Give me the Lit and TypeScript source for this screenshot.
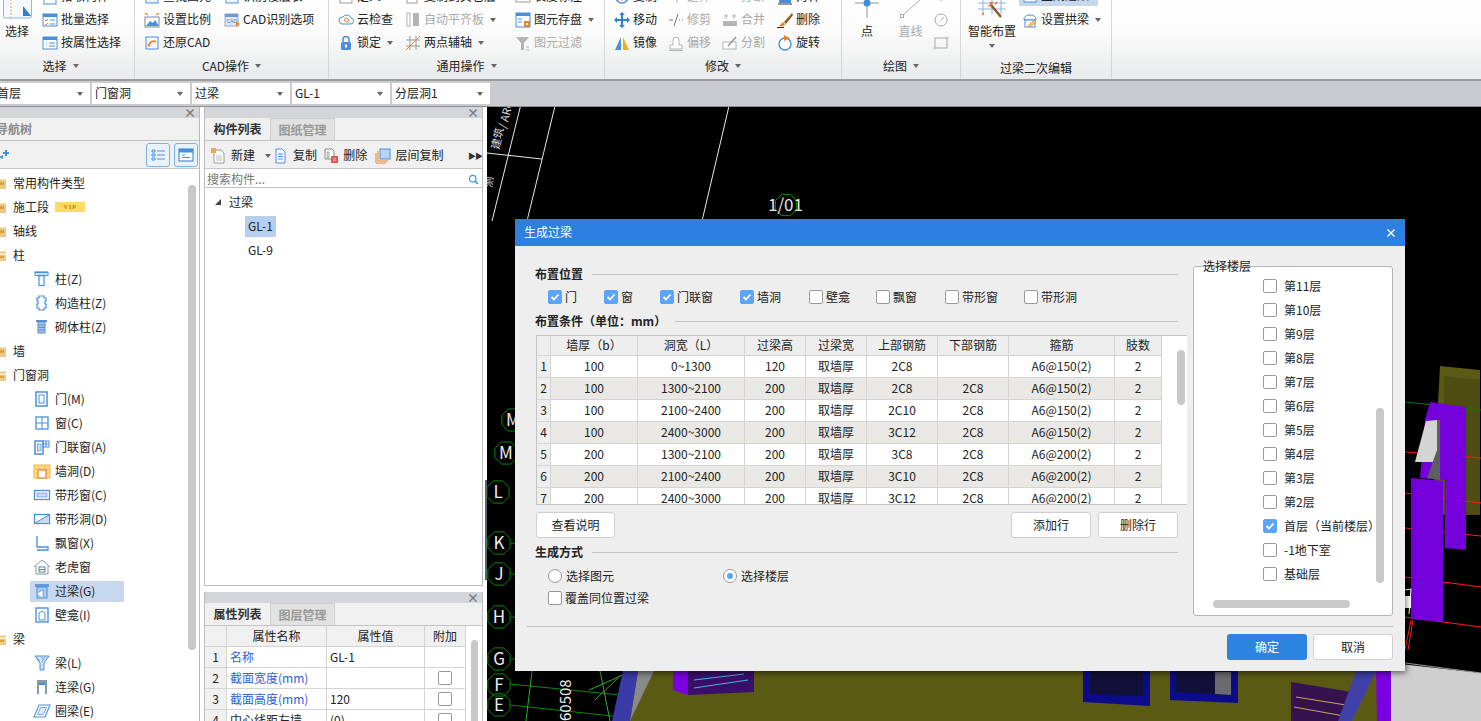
import { LitElement, html, css, svg } from "lit";
import { customElement } from "lit/decorators.js";

const B = "#4a8fdc";
const O = "#e8842c";
const G = "#b4b4b4";

const ICONS: Record<string, any> = {
  pick: svg`<rect x="2" y="1" width="12" height="14" fill="#fff" stroke="${B}"/><path d="M4 5h8M4 9h8" stroke="${O}"/>`,
  batch: svg`<rect x="1" y="2" width="14" height="12" fill="#fff" stroke="${B}"/><rect x="1" y="2" width="14" height="3" fill="${B}"/><path d="M3 8l1 1 2-2M3 12l1 1 2-2" stroke="${O}" fill="none"/><path d="M8 8h5M8 12h5" stroke="${B}"/>`,
  attr: svg`<rect x="1" y="2" width="14" height="12" fill="#fff" stroke="${B}"/><rect x="1" y="2" width="14" height="3" fill="${B}"/><path d="M4 8h1M7 8h6M4 11h1M7 11h6" stroke="${B}"/>`,
  find: svg`<rect x="2" y="2" width="12" height="12" fill="#eef4fb" stroke="${B}"/><path d="M4 6h8M4 10h8" stroke="${B}"/>`,
  scale: svg`<rect x="1" y="5" width="14" height="10" fill="#fff" stroke="#7a8a99"/><path d="M2 14l4-5 3 2 2-3 4 6z" fill="${B}"/><path d="M1 1l3 2M15 1l-3 2" stroke="${O}" stroke-width="1.5"/>`,
  restore: svg`<rect x="2" y="2" width="12" height="12" fill="none" stroke="${B}"/><path d="M5 11c0-4 4-6 7-4" stroke="${O}" stroke-width="1.6" fill="none"/><path d="M3 9l2 3 2-2z" fill="${O}"/>`,
  cadopt: svg`<rect x="1" y="2" width="13" height="12" fill="#dfe9f6" stroke="#8aa8cc"/><rect x="1" y="2" width="13" height="3" fill="#6f9ad0"/><text x="2.5" y="11" font-size="5" fill="#4a78b4" font-family="Liberation Sans">CAD</text><path d="M12 9l4 3-4 3z" fill="${O}"/>`,
  define: svg`<rect x="2" y="2" width="12" height="12" fill="#fff" stroke="#999"/><path d="M4 6h8M4 10h8" stroke="#999"/>`,
  cloud: svg`<path d="M4 12h8a3 3 0 0 0 1-6 4.500 4.500 0 0 0-8-1 3.500 3.500 0 0 0-1 7z" fill="#fff" stroke="${B}"/><circle cx="8.500" cy="8" r="2" fill="none" stroke="${O}"/><path d="M10 9.500l1.500 1.500" stroke="${O}"/>`,
  lock: svg`<rect x="3" y="7" width="10" height="8" rx="1.500" fill="${B}"/><path d="M5 7V4.500a3 3 0 0 1 6 0V7" stroke="${B}" stroke-width="1.500" fill="none"/><rect x="7" y="9.500" width="2" height="3" fill="#fff"/>`,
  copyfloor: svg`<rect x="2" y="2" width="10" height="12" fill="#fff" stroke="#999"/><path d="M4 5h6" stroke="#999"/>`,
  align: svg`<rect x="2" y="1" width="3" height="13" fill="none" stroke="${G}"/><rect x="8" y="1" width="6" height="13" fill="${G}"/>`,
  twopoint: svg`<path d="M1 5h14M1 11h14M5 1v14M11 1v14" stroke="#999"/><path d="M1 15L15 1" stroke="${O}"/>`,
  dim: svg`<rect x="1" y="3" width="14" height="10" fill="#fff" stroke="#999"/><path d="M3 8h10" stroke="${B}"/>`,
  save: svg`<rect x="1" y="1" width="14" height="14" fill="#fff" stroke="${B}"/><rect x="1" y="1" width="14" height="3" fill="${B}"/><path d="M3 7h4M3 10h4" stroke="${B}"/><rect x="9" y="9" width="6" height="6" fill="${O}"/><rect x="11" y="11" width="2" height="2" fill="#fff"/>`,
  filter: svg`<path d="M1 2h13l-5 6v7H6V8z" fill="${G}"/><path d="M11 12h3M11 15h3" stroke="${G}"/>`,
  copy: svg`<circle cx="8" cy="8" r="6" fill="#fff" stroke="${B}" stroke-width="1.500"/><path d="M8 4v8" stroke="${O}"/>`,
  move: svg`<path d="M8 0l3 3H9v4h4V5l3 3-3 3V9H9v4h2l-3 3-3-3h2V9H3v2L0 8l3-3v2h4V3H5z" fill="#2f7fd6"/>`,
  mirror: svg`<path d="M7 2v13H1z" fill="${B}"/><path d="M9 2v13h6z" fill="#f2b01e"/>`,
  extend: svg`<path d="M2 8h6M9 2v12" stroke="${G}"/>`,
  trim: svg`<path d="M1 8h4" stroke="#777"/><path d="M6 14L10 2" stroke="#777"/><path d="M11 8h1M14 8h1" stroke="#777"/>`,
  offset: svg`<path d="M2 14h12v-4h-3V5a3 3 0 0 0-6 0v5H2z" fill="#fff" stroke="${G}"/><path d="M1 15.500h14" stroke="${G}"/>`,
  brk: svg`<rect x="1" y="5" width="14" height="6" fill="${G}"/>`,
  merge: svg`<rect x="1" y="9" width="14" height="5" fill="${G}"/><path d="M4 2v5M12 2v5M2 4h4M10 4h4" stroke="${G}"/>`,
  split: svg`<rect x="1" y="7" width="13" height="7" fill="#fff" stroke="${G}"/><path d="M6 11L14 2" stroke="#999" stroke-width="1.600"/>`,
  alignr: svg`<rect x="2" y="2" width="12" height="12" fill="${B}"/><path d="M1 15h14" stroke="#333"/>`,
  del: svg`<path d="M15 1L7 10l2 2 7-9z" fill="#8b5a2b"/><path d="M6 10c-2 1-2 3-4 4 3 1 6 0 6-2z" fill="${O}"/><path d="M0 15.500h7" stroke="#333"/>`,
  rotate: svg`<circle cx="8" cy="9" r="6" fill="#fff" stroke="${B}" stroke-width="1.400"/><path d="M7 0l6 3-6 3z" fill="${O}"/>`,
  arc: svg`<circle cx="8" cy="8" r="6" fill="none" stroke="#aaa"/><path d="M8 8l3-3" stroke="#aaa"/>`,
  rect: svg`<rect x="2" y="3" width="12" height="10" fill="none" stroke="#aaa"/><path d="M1 12h2v2H1zM13 2h2v2h-2z" fill="#fff" stroke="#aaa" stroke-width=".7"/>`,
  pt: svg`<rect x="7" y="9" width="2" height="2" fill="none" stroke="#aaa"/>`,
  gen: svg`<rect x="2" y="2" width="12" height="12" fill="#fff" stroke="${B}"/>`,
  arch: svg`<path d="M2 7a6 4 0 0 1 12 0v1H2z" fill="#fff" stroke="${B}"/><rect x="3" y="8" width="10" height="7" fill="#fff" stroke="${B}"/><path d="M6 14l6-6 2 2-6 5z" fill="#f0c070" stroke="${O}" stroke-width=".6"/>`,
  fclosed: svg`<path d="M0 3h6l1 1.500h8V14H0z" fill="#eec87e"/><rect x="8" y="7" width="5" height="3" fill="#d8a24c"/>`,
  fopen: svg`<path d="M0 3h6l1 1.500h8V14H0z" fill="#eec87e"/><path d="M2 6.500h13V8H2z" fill="#fff2d2"/><rect x="8" y="9" width="5" height="2" fill="#d8a24c"/>`,
  col: svg`<path d="M1 1.500h13M3 4.500h9" stroke="${B}" stroke-width="1.400" fill="none"/><rect x="1" y="1" width="13" height="3.500" fill="none" stroke="${B}"/><rect x="5" y="4.500" width="5" height="10" fill="none" stroke="${B}" stroke-width="1.200"/>`,
  gzz: svg`<path d="M5 1h5v2h2v3h-1v3h1v4h-2v2H5v-2H3V9h1V6H3V3h2z" fill="none" stroke="${B}" stroke-width="1.200"/>`,
  qt: svg`<rect x="2" y="1" width="11" height="2" fill="#5b8ec9"/><rect x="4" y="3" width="7" height="11" fill="#a9c5e6" stroke="#5b8ec9"/><path d="M4 6h7M4 8.500h7M4 11h7" stroke="#5b8ec9"/>`,
  door: svg`<rect x="2" y="1" width="11" height="14" fill="none" stroke="${B}" stroke-width="1.500"/><rect x="5" y="4" width="5" height="8" fill="#fff" stroke="${B}"/>`,
  win: svg`<rect x="2" y="2" width="12" height="12" fill="none" stroke="${B}" stroke-width="1.300"/><path d="M8 2v12M2 8h12" stroke="${B}"/>`,
  dlc: svg`<rect x="1" y="2" width="8" height="13" fill="none" stroke="${B}" stroke-width="1.500"/><rect x="3.500" y="5" width="3.500" height="7" fill="#cfe0f5" stroke="${B}" stroke-width=".7"/><rect x="9" y="2" width="6" height="6" fill="none" stroke="${B}"/><path d="M12 2v6M9 5h6" stroke="${B}"/>`,
  hole: svg`<rect x="0" y="2" width="16" height="13" fill="#fbd88a" stroke="#f0b848"/><path d="M0 6h16M5 2v4M11 2v4M0 10h4M12 10h4" stroke="#f5c35a"/><rect x="4" y="7" width="8" height="8" fill="#fff" stroke="${O}" stroke-width="1.200"/>`,
  dxc: svg`<rect x="0.500" y="3.500" width="15" height="9" fill="none" stroke="${B}" stroke-width="1.300"/><rect x="3" y="6" width="10" height="4" fill="#c5daf3" stroke="${B}" stroke-width=".6"/>`,
  dxd: svg`<rect x="0.500" y="3.500" width="15" height="9" fill="#fff" stroke="${B}" stroke-width="1.300"/><path d="M1 12L15 4v8z" fill="#c5daf3"/><path d="M1 12L15 4" stroke="${B}"/>`,
  bay: svg`<path d="M3 1v11h11v3H3" fill="none" stroke="${B}" stroke-width="1.300"/>`,
  dormer: svg`<path d="M0 8l8-7 8 7" fill="none" stroke="#8a949e"/><path d="M2 7v8h12V7" fill="none" stroke="#8a949e"/><rect x="5" y="8" width="6" height="5" fill="none" stroke="#5f7fa8"/><path d="M5 10.500h6" stroke="#5f7fa8"/>`,
  lintel: svg`<rect x="1" y="1" width="14" height="3" fill="#5f9be0"/><rect x="3" y="4" width="10" height="11" fill="#a9c9ee" stroke="${B}"/><path d="M3 10l6-3v8" fill="#fff" stroke="${B}" stroke-width=".7"/>`,
  niche: svg`<rect x="2" y="1" width="12" height="14" fill="none" stroke="${B}" stroke-width="1.400"/><path d="M5 13V6l3-2 3 2v7z" fill="#fff" stroke="${B}"/>`,
  beam: svg`<path d="M1 1h14l-5 7v7H6V8z" fill="#cfe0f5" stroke="${B}" stroke-width="1"/><path d="M3 3l3 3M7 2l3 3M11 2l-3 5" stroke="${B}" stroke-width=".7"/>`,
  link: svg`<path d="M3 15V1h10v14h-2V6H5v9z" fill="#8b98a6"/><rect x="5" y="4" width="6" height="2" fill="${B}"/>`,
  ring: svg`<path d="M5 2h11l-5 12H0z" fill="none" stroke="${B}" stroke-width="1.100"/><path d="M6.500 4.500h6l-3 7h-6z" fill="#dbe8f7" stroke="${B}" stroke-width=".7"/>`,
  navlist: svg`<path d="M2 3h3v2H2zM2 7h3v2H2zM2 11h3v2H2z" fill="none" stroke="${B}"/><path d="M7 4h8M7 8h8M7 12h8" stroke="${B}" stroke-width="1.200"/>`,
  navcard: svg`<rect x="1" y="2" width="14" height="12" fill="#fff" stroke="${B}" stroke-width="1.200"/><rect x="1" y="2" width="14" height="3.500" fill="${B}"/><path d="M4 8h3M4 10.500h8" stroke="${B}"/>`,
  add: svg`<path d="M10 6h6M13 3v6" stroke="${B}" stroke-width="2"/><path d="M6 10l4-2v4z" fill="${B}"/>`,
  tnew: svg`<path d="M3 2h7l3 3v10H3z" fill="#fff" stroke="#999"/><path d="M5 8h6M5 10h6M5 12h6" stroke="#bbb"/><rect x="0" y="0" width="5" height="5" fill="#f4a640"/>`,
  tcopy: svg`<path d="M3 1h6l3 3v11H3z" fill="#fff" stroke="${B}"/><path d="M5 6h5M5 8.500h5M5 11h5" stroke="${B}"/>`,
  tdel: svg`<path d="M2 1h7l2 2v8H2z" fill="#fff" stroke="#888"/><path d="M4 4h2v6H4z" fill="#ddd" stroke="#888" stroke-width=".6"/><rect x="8" y="8" width="7" height="7" fill="#e05757"/><path d="M10 10l3 3M13 10l-3 3" stroke="#fff"/>`,
  tfloor: svg`<rect x="5" y="1" width="10" height="10" fill="#b8d4f5" stroke="${B}"/><path d="M3 3v10h10M1 5v10h10" fill="none" stroke="${O}"/>`,
  search: svg`<circle cx="7" cy="7" r="4" fill="none" stroke="#3f9ad6" stroke-width="1.600"/><path d="M10 10l3.500 3.500" stroke="#3f9ad6" stroke-width="2"/>`,
};

const ic = (n: string, cls = "ic") => html`<svg class=${cls} viewBox="0 0 16 16">${ICONS[n]}</svg>`;

type Item = { i?: string; t?: string; dis?: boolean; car?: boolean; hl?: boolean };
type Col = { w: number; big?: string; items?: Item[]; t?: string; dis?: boolean; car?: boolean };
type Group = { cls: string; w: number; pad: number; label: string; nocar?: boolean; cols: Col[] };

const GROUPS: Group[] = [
  { cls: "first", w: 148, pad: 13, label: "选择", cols: [
    { w: 34, big: "select", t: "选择" },
    { w: 8, items: [] },
    { w: 90, items: [{ i: "pick", t: "拾取构件" }, { i: "batch", t: "批量选择" }, { i: "attr", t: "按属性选择" }] },
  ]},
  { cls: "", w: 194, pad: 9, label: "CAD操作", cols: [
    { w: 80, items: [{ i: "find", t: "查找图元" }, { i: "scale", t: "设置比例" }, { i: "restore", t: "还原CAD" }] },
    { w: 100, items: [{ i: "find", t: "识别楼层表" }, { i: "cadopt", t: "CAD识别选项" }, {}] },
  ]},
  { cls: "", w: 276, pad: 9, label: "通用操作", cols: [
    { w: 67, items: [{ i: "define", t: "定义" }, { i: "cloud", t: "云检查" }, { i: "lock", t: "锁定", car: true }] },
    { w: 110, items: [{ i: "copyfloor", t: "复制到其它层" }, { i: "align", t: "自动平齐板", dis: true, car: true }, { i: "twopoint", t: "两点辅轴", car: true }] },
    { w: 88, items: [{ i: "dim", t: "长度标注" }, { i: "save", t: "图元存盘", car: true }, { i: "filter", t: "图元过滤", dis: true }] },
  ]},
  { cls: "", w: 237, pad: 9, label: "修改", cols: [
    { w: 54, items: [{ i: "copy", t: "复制" }, { i: "move", t: "移动" }, { i: "mirror", t: "镜像" }] },
    { w: 54, items: [{ i: "extend", t: "延伸", dis: true }, { i: "trim", t: "修剪", dis: true }, { i: "offset", t: "偏移", dis: true }] },
    { w: 55, items: [{ i: "brk", t: "打断", dis: true }, { i: "merge", t: "合并", dis: true }, { i: "split", t: "分割", dis: true }] },
    { w: 50, items: [{ i: "alignr", t: "对齐" }, { i: "del", t: "删除" }, { i: "rotate", t: "旋转" }] },
  ]},
  { cls: "", w: 119, pad: 0, label: "绘图", cols: [
    { w: 50, big: "point", t: "点" },
    { w: 37, big: "line", t: "直线", dis: true },
    { w: 4, items: [] },
    { w: 24, items: [{ i: "pt" }, { i: "arc" }, { i: "rect" }] },
  ]},
  { cls: "last", w: 151, pad: 1, label: "过梁二次编辑", nocar: true, cols: [
    { w: 60, big: "wand", t: "智能布置", car: true },
    { w: 88, items: [{ i: "gen", t: "生成过梁", hl: true }, { i: "arch", t: "设置拱梁", car: true }, {}] },
  ]},
];

const BIG: Record<string, any> = {
  select: svg`<rect x="1.500" y="-8" width="28" height="26" rx="2" fill="#f4f8fd" stroke="#8db6e6"/><path d="M9 -8v26" stroke="#eda83c" stroke-dasharray="2 1.500"/><path d="M21 6l8 10h-8z" fill="#2f7fc9"/>`,
  point: svg`<path d="M3 3h24M15 -4v22" stroke="#8a96a2"/><circle cx="15" cy="3" r="3.500" fill="#3b8fe2"/>`,
  line: svg`<path d="M6 16L26 -2" stroke="#aaa"/><rect x="4.500" y="14.500" width="3" height="3" fill="#fff" stroke="#aaa"/>`,
  wand: svg`<path d="M1 3h28M1 9h28M6 -2v16M15 -2v16M24 -2v16" stroke="#8ab4e4"/><path d="M14 5l10 12" stroke="#8a5a2b" stroke-width="2.500"/><path d="M13 2l1 3-3 1M20 2l-2 2" stroke="#e8602c" stroke-width="1.300" fill="none"/><circle cx="6" cy="14" r="1.200" fill="#e8842c"/><circle cx="15" cy="3" r="1.200" fill="#e8842c"/>`,
};

const NAV: { i: string; t: string; child?: boolean; sel?: boolean; vip?: boolean }[] = [
  { i: "fclosed", t: "常用构件类型" },
  { i: "fclosed", t: "施工段", vip: true },
  { i: "fclosed", t: "轴线" },
  { i: "fopen", t: "柱" },
  { i: "col", t: "柱(Z)", child: true },
  { i: "gzz", t: "构造柱(Z)", child: true },
  { i: "qt", t: "砌体柱(Z)", child: true },
  { i: "fclosed", t: "墙" },
  { i: "fopen", t: "门窗洞" },
  { i: "door", t: "门(M)", child: true },
  { i: "win", t: "窗(C)", child: true },
  { i: "dlc", t: "门联窗(A)", child: true },
  { i: "hole", t: "墙洞(D)", child: true },
  { i: "dxc", t: "带形窗(C)", child: true },
  { i: "dxd", t: "带形洞(D)", child: true },
  { i: "bay", t: "飘窗(X)", child: true },
  { i: "dormer", t: "老虎窗", child: true },
  { i: "lintel", t: "过梁(G)", child: true, sel: true },
  { i: "niche", t: "壁龛(I)", child: true },
  { i: "fopen", t: "梁" },
  { i: "beam", t: "梁(L)", child: true },
  { i: "link", t: "连梁(G)", child: true },
  { i: "ring", t: "圈梁(E)", child: true },
];

const POS: [string, boolean, string][] = [
  ["门", true, "p1"], ["窗", true, "p2"], ["门联窗", true, "p3"], ["墙洞", true, "p4"],
  ["壁龛", false, "p5"], ["飘窗", false, "p6"], ["带形窗", false, "p7"], ["带形洞", false, "p8"],
];

const HEAD = ["", "墙厚（b）", "洞宽（L）", "过梁高", "过梁宽", "上部钢筋", "下部钢筋", "箍筋", "肢数"];
const ROWS = [
  ["1", "100", "0~1300", "120", "取墙厚", "2C8", "", "A6@150(2)", "2"],
  ["2", "100", "1300~2100", "200", "取墙厚", "2C8", "2C8", "A6@150(2)", "2"],
  ["3", "100", "2100~2400", "200", "取墙厚", "2C10", "2C8", "A6@150(2)", "2"],
  ["4", "100", "2400~3000", "200", "取墙厚", "3C12", "2C8", "A6@150(2)", "2"],
  ["5", "200", "1300~2100", "200", "取墙厚", "3C8", "2C8", "A6@200(2)", "2"],
  ["6", "200", "2100~2400", "200", "取墙厚", "3C10", "2C8", "A6@200(2)", "2"],
  ["7", "200", "2400~3000", "200", "取墙厚", "3C12", "2C8", "A6@200(2)", "2"],
];

const FLOORS: [string, boolean][] = [
  ["第11层", false], ["第10层", false], ["第9层", false], ["第8层", false], ["第7层", false], ["第6层", false],
  ["第5层", false], ["第4层", false], ["第3层", false], ["第2层", false], ["首层（当前楼层）", true],
  ["-1地下室", false], ["基础层", false],
];

const PROPS: [string, string, string, boolean, boolean][] = [
  ["1", "名称", "GL-1", false, true],
  ["2", "截面宽度(mm)", "", true, true],
  ["3", "截面高度(mm)", "120", true, true],
  ["4", "中心线距左墙", "(0)", true, false],
];

const AXES: [string, number, number][] = [
  ["M", 513, 420], ["M", 506, 453], ["L", 498, 492], ["K", 499, 543], ["J", 499, 574],
  ["H", 499, 617], ["G", 499, 659], ["F", 499, 685], ["E", 499, 705],
];

const hex = (cx: number, cy: number, r: number) =>
  Array.from({ length: 8 }, (_, k) => {
    const a = Math.PI / 8 + (k * Math.PI) / 4;
    return `${(cx + r * Math.cos(a)).toFixed(1)},${(cy + r * Math.sin(a)).toFixed(1)}`;
  }).join(" ");

@customElement("app-root")
export class AppRoot extends LitElement {
  static styles = css`
    :host { display: block; position: relative; width: 1481px; height: 721px; overflow: hidden; background: #fff;
      font: 12px/1.2 "Noto Sans CJK SC", "Liberation Sans", sans-serif; color: #222; }
    .ic { width: 16px; height: 16px; flex: none; overflow: visible; }
    .ribbon { display: flex; height: 79px; overflow: hidden; background: linear-gradient(#fff 0%, #fbfbfb 40%, #e8eaeb 100%); }
    .group { flex: none; display: flex; flex-direction: column; border-right: 1px solid #d4d6d7; box-sizing: border-box; }
    .group.first { margin-left: -13px; }
    .gbody { height: 54px; display: flex; }
    .col { flex: none; display: flex; flex-direction: column; justify-content: flex-end; box-sizing: border-box; }
    .row { height: 23px; flex: none; display: flex; align-items: center; gap: 3px; white-space: nowrap; }
    .row .car { margin-left: 3px; }
    .row.dis, .bigcol.dis { color: #aaa; }
    .row.hl { background: #c6d7ee; height: 21px; margin-bottom: 2px; margin-left: -3px; padding-left: 3px; width: 76px; }
    .car { flex: none; width: 0; height: 0; border-top: 4px solid #666; border-left: 3.500px solid transparent; border-right: 3.500px solid transparent; margin-left: 6px; }
    .bigcol { flex: none; display: flex; flex-direction: column; align-items: center; }
    .bigcol .car { margin: 4px 0 0 0; }
    .bigic { width: 30px; height: 22px; overflow: visible; flex: none; }
    .bigt { height: 18px; line-height: 18px; white-space: nowrap; }
    .glabel { height: 24px; display: flex; align-items: center; justify-content: center; }
    .last .glabel { padding-top: 4px; box-sizing: border-box; }
    .sep { height: 2px; background: #9a9b9c; }
    .selbar { height: 26px; background: #c9cbce; display: flex; align-items: center; gap: 2px; box-sizing: border-box; border-bottom: 1px solid #8d8e90; }
    .sel { flex: none; width: 98px; height: 21px; background: #fff; display: flex; align-items: center; justify-content: space-between; padding: 0 7px 0 3px; box-sizing: border-box; }
    .sel.first { margin-left: -6px; width: 96px; }
    .sel .car { margin: 0; }
    .main { display: flex; height: 614px; }
    .nav { flex: none; width: 200px; border-right: 1px solid #b9b9b9; box-sizing: border-box; display: flex; flex-direction: column; background: #f0f0f0; position: relative; overflow: hidden; }
    .hdr { flex: none; height: 11px; background: #d3d5d9; display: flex; align-items: center; justify-content: flex-end; padding-right: 3px; color: #777; font-size: 12px; font-weight: 700; line-height: 11px; }
    .navtab { flex: none; height: 23px; padding-top: 1px; display: flex; align-items: center; color: #888; font-weight: 700; margin-left: -4px; border-bottom: 1px solid #c4c4c4; box-sizing: border-box; }
    .navtool { flex: none; height: 28px; display: flex; align-items: center; gap: 4px; justify-content: flex-end; padding-right: 1px; border-bottom: 1px solid #c4c4c4; box-sizing: border-box; }
    .navadd { margin-right: auto; margin-left: -7px; display: flex; }
    .navbtn { width: 24px; height: 24px; border: 1px solid #7ab0ec; border-radius: 3px; box-sizing: border-box; display: flex; align-items: center; justify-content: center; background: #eaf2fb; }
    .tree { flex: 1; background: #fff; padding-top: 2px; }
    .trow { height: 24px; display: flex; align-items: center; gap: 6px; margin-left: -9px; white-space: nowrap; }
    .trow.child { margin-left: 30px; }
    .tinner { display: flex; align-items: center; gap: 5px; width: 94px; height: 21px; padding-left: 4px; box-sizing: border-box; }
    .tinner.on { background: #c6d7ee; }
    .vip { width: 30px; height: 10px; background: #ffd966; color: #b48a10; font: 700 7px/10px "Liberation Serif", serif; text-align: center; letter-spacing: .5px; }
    .navsb { position: absolute; left: 188px; top: 78px; width: 8px; height: 465px; background: #c8c8c8; border-radius: 4px; }
    .midcol { flex: none; width: 287px; padding: 0 4px 0 4px; box-sizing: border-box; display: flex; flex-direction: column; gap: 6px; background: #fff; position: relative; }
    .handle { position: absolute; right: 0; top: 373px; width: 2px; height: 100px; background: #5a6670; }
    .panel { border: 1px solid #bdbdbd; border-top: 0; box-sizing: border-box; display: flex; flex-direction: column; background: #fff; overflow: hidden; }
    .panel.top { flex: none; height: 479px; }
    .panel.bot { flex: 1; border-bottom: 0; }
    .tabs { flex: none; height: 23px; display: flex; background: #f0f0f0; border-bottom: 1px solid #c4c4c4; box-sizing: border-box; }
    .tab { width: 65px; display: flex; align-items: center; justify-content: center; font-weight: 700; color: #333; padding-top: 1px; box-sizing: border-box; }
    .tab.off { background: #e2e2e2; color: #999; border: 1px solid #cfcfcf; border-bottom: 0; width: 65px; }
    .ctool { flex: none; height: 28px; padding-top: 2px; display: flex; align-items: center; background: #f0f0f0; padding-left: 6px; border-bottom: 1px solid #c4c4c4; box-sizing: border-box; }
    .citem { display: flex; align-items: center; gap: 4px; white-space: nowrap; }
    .c1 { width: 63px; } .c2 { width: 51px; } .c3 { width: 53px; } .c4 { width: 94px; }
    .more { color: #333; font-size: 8px; letter-spacing: -1px; }
    .csearch { flex: none; height: 19px; padding: 2px 2px 0 2px; display: flex; align-items: center; justify-content: space-between; color: #777; border-bottom: 1px solid #c4c4c4; box-sizing: border-box; }
    .csearch .ic { width: 13px; height: 13px; }
    .ctree { flex: 1; padding-top: 2px; }
    .crow { height: 24px; display: flex; align-items: center; }
    .crow.root { padding-left: 10px; gap: 8px; }
    .tri { width: 0; height: 0; border-bottom: 6px solid #444; border-left: 6px solid transparent; }
    .leaf { margin-left: 40px; height: 21px; padding: 0 3px; display: flex; align-items: center; }
    .leaf.on { background: #b5cff0; }
    .ptable { flex: 1; position: relative; overflow: hidden; }
    .prow { display: grid; grid-template-columns: 22px 100px 98px 41px; height: 21px; }
    .pc { border-right: 1px solid #d4d4d4; border-bottom: 1px solid #d4d4d4; box-sizing: border-box; display: flex; align-items: center; padding: 0 3px; white-space: nowrap; overflow: hidden; }
    .pc.h, .pc.n { background: #f0f0f0; justify-content: center; }
    .pc.k { color: #2a62dc; }
    .pc.c { justify-content: center; }
    .psb { position: absolute; left: 266px; top: 14px; width: 7px; height: 90px; background: #c8c8c8; border-radius: 4px; }
    .canvas { flex: 1; background: #000; overflow: hidden; }
    .canvas svg { display: block; width: 994px; height: 614px; }
    .dialog { position: absolute; left: 515px; top: 219px; width: 890px; height: 452px; background: #eee; box-shadow: 1px 2px 6px rgba(0,0,0,.55); display: flex; flex-direction: column; }
    .dtitle { flex: none; height: 27px; background: #2d7fe0; color: #fff; display: flex; align-items: center; justify-content: space-between; padding: 0 9px 0 9px; }
    .dx { width: 10px; height: 10px; display: block; }
    .dmain { flex: none; height: 380px; display: flex; }
    .dleft { flex: none; width: 658px; margin-left: 20px; padding-top: 19px; box-sizing: border-box; }
    .sec { height: 18px; display: flex; align-items: center; gap: 9px; font-weight: 700; color: #222; width: 643px; }
    .sec i { flex: 1; height: 1px; background: #c4c4c4; }
    .cbs { height: 18px; margin-top: 5px; margin-bottom: 6px; position: relative; }
    .cbl { display: flex; align-items: center; gap: 3px; position: absolute; top: 2px; white-space: nowrap; }
    .p1 { left: 13px; } .p2 { left: 69px; } .p3 { left: 125px; } .p4 { left: 205px; }
    .p5 { left: 274px; } .p6 { left: 341px; } .p7 { left: 410px; } .p8 { left: 489px; }
    .cb { flex: none; width: 14px; height: 14px; border: 1px solid #999; border-radius: 2px; background: #fff; box-sizing: border-box; display: block; }
    .cb.on { background: #5aa5f6; border-color: #5aa5f6; }
    .cb svg { display: block; width: 12px; height: 12px; }
    .tbl { margin-top: 5px; margin-left: 1px; width: 651px; height: 170px; background: #fff; overflow: hidden; position: relative; border-top: 1px solid #c4c4c4; border-left: 1px solid #c4c4c4; border-bottom: 1px solid #c4c4c4; box-sizing: border-box; }
    .trw { display: grid; grid-template-columns: 14px 87px 107px 61px 61px 71px 71px 106px 47px; height: 22px; }
    .trw.h { height: 20px; }
    .tc { border-right: 1px solid #d4d4d4; border-bottom: 1px solid #d4d4d4; box-sizing: border-box; display: flex; align-items: center; justify-content: center; white-space: nowrap; }
    .trw.h .tc, .tc.n { background: #eee; }
    .trw.alt .tc { background: #e9e8e4; }
    .trw.alt .tc.n { background: #eee; }
    .tbl .vsb { position: absolute; left: 640px; top: 14px; width: 8px; height: 55px; background: #c8c8c8; border-radius: 4px; }
    .btns { display: flex; justify-content: space-between; margin: 7px 0 5px 1px; width: 642px; }
    .btnr { display: flex; gap: 7px; }
    .btnr .btn { width: 80px; }
    .btn { width: 79px; height: 26px; background: #fff; border: 1px solid #d0d0d0; border-radius: 3px; box-sizing: border-box; display: flex; align-items: center; justify-content: center; }
    .how { height: 18px; margin-top: 6px; position: relative; }
    .how.b { margin-top: 4px; }
    .rbl { gap: 4px; }
    .rb { flex: none; width: 14px; height: 14px; border: 1px solid #999; border-radius: 50%; background: #fff; box-sizing: border-box; display: flex; align-items: center; justify-content: center; }
    .rb.on::after { content: ""; width: 6px; height: 6px; border-radius: 50%; background: #5aa5f6; }
    .r2 { left: 188px; }
    .fset { flex: none; margin-top: 20px; width: 200px; height: 350px; background: #fff; border: 1px solid #b4b4b4; border-radius: 3px; box-sizing: border-box; position: relative; padding-top: 7px; overflow: hidden; }
    .fwrap { position: relative; }
    .legend { position: absolute; left: 10px; top: 12px; height: 16px; line-height: 16px; color: #222; z-index: 1; }
    .frow { height: 24px; display: flex; align-items: center; padding-left: 69px; gap: 7px; white-space: nowrap; }
    .ftxt { max-width: 88px; overflow: hidden; }
    .fv { position: absolute; left: 182px; top: 141px; width: 8px; height: 175px; background: #c8c8c8; border-radius: 4px; }
    .fh { position: absolute; left: 19px; top: 333px; width: 137px; height: 8px; background: #c8c8c8; border-radius: 4px; }
    .dsep { flex: none; height: 1px; background: #c4c4c4; margin: 0 12px; }
    .dfoot { flex: none; display: flex; justify-content: flex-end; gap: 6px; padding: 7px 12px 0 0; }
    .ok { width: 80px; height: 26px; background: #2d84e0; color: #fff; border-radius: 3px; display: flex; align-items: center; justify-content: center; }
    .no { width: 80px; }
  `;

  private cb(on: boolean) {
    return html`<span class="cb ${on ? "on" : ""}">${on
      ? html`<svg viewBox="0 0 12 12"><path d="M2.500 6l2.500 2.500 4.500-5" fill="none" stroke="#fff" stroke-width="1.800"/></svg>`
      : ""}</span>`;
  }

  private ribbon() {
    return html`<div class="ribbon">
      ${GROUPS.map((g) => html`<div class="group ${g.cls}" style="width:${g.w}px">
        <div class="gbody" style="padding-left:${g.pad}px">
          ${g.cols.map((c) => c.big
            ? html`<div class="bigcol ${c.dis ? "dis" : ""}" style="width:${c.w}px">
                <svg class="bigic" viewBox="0 0 30 22">${BIG[c.big]}</svg>
                <div class="bigt">${c.t}</div>
                ${c.car ? html`<span class="car"></span>` : ""}
              </div>`
            : html`<div class="col" style="width:${c.w}px">
                ${c.items!.map((it) => html`<div class="row ${it.dis ? "dis" : ""} ${it.hl ? "hl" : ""}">
                  ${it.i ? ic(it.i) : ""}${it.t ? html`<span>${it.t}</span>` : ""}${it.car ? html`<span class="car"></span>` : ""}
                </div>`)}
              </div>`)}
        </div>
        <div class="glabel"><span>${g.label}</span>${g.nocar ? "" : html`<span class="car"></span>`}</div>
      </div>`)}
    </div>
    <div class="sep"></div>
    <div class="selbar">
      ${["首层", "门窗洞", "过梁", "GL-1", "分层洞1"].map((s, i) => html`<div class="sel ${i === 0 ? "first" : ""}"><span>${s}</span><span class="car"></span></div>`)}
    </div>`;
  }

  private nav() {
    return html`<div class="nav">
      <div class="hdr">×</div>
      <div class="navtab">导航树</div>
      <div class="navtool">
        <span class="navadd">${ic("add")}</span>
        <span class="navbtn">${ic("navlist")}</span>
        <span class="navbtn">${ic("navcard")}</span>
      </div>
      <div class="tree">
        ${NAV.map((n) => n.child
          ? html`<div class="trow child"><div class="tinner ${n.sel ? "on" : ""}">${ic(n.i)}<span>${n.t}</span></div></div>`
          : html`<div class="trow">${ic(n.i)}<span>${n.t}</span>${n.vip ? html`<span class="vip">VIP</span>` : ""}</div>`)}
      </div>
      <div class="navsb"></div>
    </div>`;
  }

  private mid() {
    return html`<div class="midcol">
      <div class="panel top">
        <div class="hdr">×</div>
        <div class="tabs"><div class="tab">构件列表</div><div class="tab off">图纸管理</div></div>
        <div class="ctool">
          <div class="citem c1">${ic("tnew")}<span>新建</span><span class="car"></span></div>
          <div class="citem c2">${ic("tcopy")}<span>复制</span></div>
          <div class="citem c3">${ic("tdel")}<span>删除</span></div>
          <div class="citem c4">${ic("tfloor")}<span>层间复制</span></div>
          <span class="more">▶▶</span>
        </div>
        <div class="csearch"><span>搜索构件...</span>${ic("search")}</div>
        <div class="ctree">
          <div class="crow root"><span class="tri"></span><span>过梁</span></div>
          <div class="crow"><div class="leaf on">GL-1</div></div>
          <div class="crow"><div class="leaf">GL-9</div></div>
        </div>
      </div>
      <div class="panel bot">
        <div class="hdr">×</div>
        <div class="tabs"><div class="tab">属性列表</div><div class="tab off">图层管理</div></div>
        <div class="ptable">
          <div class="prow">
            <div class="pc h"></div><div class="pc h">属性名称</div><div class="pc h">属性值</div><div class="pc h">附加</div>
          </div>
          ${PROPS.map(([n, k, v, c, blue]) => html`<div class="prow">
            <div class="pc n">${n}</div>
            <div class="pc ${blue ? "k" : ""}">${k}</div>
            <div class="pc">${v}</div>
            <div class="pc c">${c ? this.cb(false) : ""}</div>
          </div>`)}
          <div class="psb"></div>
        </div>
      </div>
      <div class="handle"></div>
    </div>`;
  }

  private canvas() {
    return html`<div class="canvas"><svg viewBox="487 107 994 614">
      <g stroke="#e8e8e8" stroke-width="1" fill="none">
        <path d="M520.500 106L492 221M555 106L527 221M729 106L702 221M487 153L542 159"/>
      </g>
      <g fill="#ddd" font-size="11" font-family="Noto Sans CJK SC, sans-serif">
        <text transform="translate(499 150) rotate(-78)">建筑</text>
        <text transform="translate(506 129) rotate(-75)">/ ARCH</text>
        <text transform="translate(492 188) rotate(-85)">测</text>
      </g>
      <polygon points=${hex(786, 205, 11.5)} fill="none" stroke="#0a8a0a"/>
      <text x="768" y="211" fill="#e6e6e6" font-size="17" font-family="Noto Sans CJK SC, sans-serif">1/01</text>
      <g stroke="#0a8a0a" fill="none">
        <path d="M511 543l30 3M511 574l30 2M511 617l20 1M511 659l20 2M510 684l120 12M510 705l130 14"/>
        ${AXES.map(([, x, y]) => svg`<polygon points=${hex(x, y, 12)}/>`)}
      </g>
      <g fill="#eee" font-size="17" font-family="Noto Sans CJK SC, sans-serif" text-anchor="middle">
        ${AXES.map(([t, x, y]) => svg`<text x=${x} y=${y + 6}>${t}</text>`)}
      </g>
      <text transform="translate(571 721) rotate(-90)" fill="#eee" font-size="15" font-family="Noto Sans CJK SC, sans-serif">60508</text>
      <path d="M532 671l-6 50M589 690l34-15M595 700l26-25M600 671l10 50" stroke="#2fae2f" fill="none"/>
      <polygon points="623,671 638,671 630,721 612,721" fill="#3b3ba8"/>
      <polygon points="638,671 654,671 654,721 630,721" fill="#8a8a8a"/>
      <polygon points="654,671 1378,671 1378,721 630,721" fill="#5a5a14"/>
      <polygon points="673,671 688,671 688,695 673,690" fill="#7a00e0"/>
      <polygon points="688,671 754,671 754,692 688,695" fill="#3a0f6a"/>
      <path d="M694 680l50-6M694 688l54 -8" stroke="#49b5d8" fill="none"/>
      <polygon points="1083,671 1150,671 1150,706 1083,702" fill="#0c0c8a"/>
      <polygon points="1090,671 1143,671 1143,696 1090,694" fill="#101038"/>
      <polygon points="1170,671 1238,671 1238,703 1170,700" fill="#0c0c8a"/>
      <polygon points="1176,671 1231,671 1231,695 1176,692" fill="#101038"/>
      <polygon points="1215,672 1231,672 1231,695 1215,694" fill="#6a6a70"/>
      <polygon points="1291,682 1352,692 1352,721 1291,721" fill="#36124e"/>
      <path d="M1296 697l50 8M1294 707l50 9" stroke="#c9a45a" fill="none"/>
      <polygon points="1356,671 1376,671 1352,721 1338,721" fill="#4040a8"/>
      <polygon points="1376,671 1391,671 1391,721 1377,721" fill="#7a00e0"/>
      <polygon points="1391,663 1481,673 1481,721 1391,721" fill="#cfcfcf"/>
      <polygon points="1440,366 1480,370 1480,515 1432,515" fill="#5a5a14"/>
      <polygon points="1444,376 1480,380 1480,515 1444,515" fill="#4d4d12"/>
      <path d="M1405 402l76 8" stroke="#0a7a0a"/>
      <path d="M1405 452l76 6M1405 493l76 10M1405 528l76 8M1405 577l76 10M1405 617l76 10" stroke="#ff1a1a" stroke-width="1.200"/>
      <polygon points="1430,402 1466,407 1466,550 1445,548 1445,480 1420,478 1425,420" fill="#7400dc"/>
      <polygon points="1411,478 1443,481 1443,622 1411,619" fill="#7400dc"/>
      <polygon points="1426,421 1437,420 1437,462 1415,462" fill="#d4d4d4"/>
      <polygon points="1437,420 1440,420 1440,480 1427,478 1437,450" fill="#5e5e5e"/>
      <path d="M1405 590l6-1-2 25" stroke="#fff" fill="none"/>
      <rect x="1405" y="596" width="6" height="12" fill="#fff"/>
      <path d="M1405 650l6-30M1408 650l5-30" stroke="#ff2a2a" fill="none"/>
      <path d="M1405 663l76 10" stroke="#999"/>
    </svg></div>`;
  }

  private dialog() {
    return html`<div class="dialog">
      <div class="dtitle"><span>生成过梁</span><svg class="dx" viewBox="0 0 10 10"><path d="M1.500 1.500l7 7M8.500 1.500l-7 7" stroke="#fff" stroke-width="1.400"/></svg></div>
      <div class="dmain">
        <div class="dleft">
          <div class="sec"><span>布置位置</span><i></i></div>
          <div class="cbs">
            ${POS.map(([t, on, p]) => html`<label class="cbl ${p}">${this.cb(on)}<span>${t}</span></label>`)}
          </div>
          <div class="sec"><span>布置条件（单位：mm）</span><i></i></div>
          <div class="tbl">
            <div class="trw h">${HEAD.map((h) => html`<div class="tc">${h}</div>`)}</div>
            ${ROWS.map((r, i) => html`<div class="trw ${i % 2 ? "alt" : ""}">
              ${r.map((c, j) => html`<div class="tc ${j === 0 ? "n" : ""}">${c}</div>`)}
            </div>`)}
            <div class="vsb"></div>
          </div>
          <div class="btns">
            <div class="btn">查看说明</div>
            <div class="btnr"><div class="btn">添加行</div><div class="btn">删除行</div></div>
          </div>
          <div class="sec"><span>生成方式</span><i></i></div>
          <div class="how">
            <label class="cbl rbl p1"><span class="rb"></span><span>选择图元</span></label>
            <label class="cbl rbl r2"><span class="rb on"></span><span>选择楼层</span></label>
          </div>
          <div class="how b"><label class="cbl p1">${this.cb(false)}<span>覆盖同位置过梁</span></label></div>
        </div>
        <div class="fwrap">
          <div class="legend">选择楼层</div>
          <div class="fset">
            ${FLOORS.map(([t, on]) => html`<div class="frow">${this.cb(on)}<span class="ftxt">${t}</span></div>`)}
            <div class="fv"></div>
            <div class="fh"></div>
          </div>
        </div>
      </div>
      <div class="dsep"></div>
      <div class="dfoot"><div class="ok">确定</div><div class="btn no">取消</div></div>
    </div>`;
  }

  render() {
    return html`${this.ribbon()}
      <div class="main">${this.nav()}${this.mid()}${this.canvas()}</div>
      ${this.dialog()}`;
  }
}
